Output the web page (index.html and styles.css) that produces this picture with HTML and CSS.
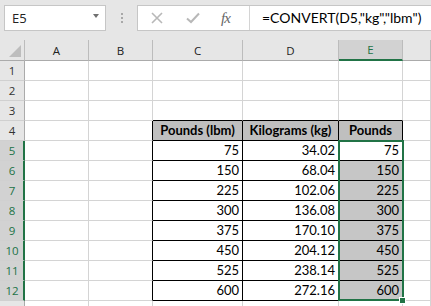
FILE: index.html
```html
<!DOCTYPE html>
<html>
<head>
<meta charset="utf-8">
<link rel="stylesheet" href="styles.css">
</head>
<body>
<div class="app">
  <div class="fbar">
    <div class="namebox"><span class="nb-text">E5</span><span class="nb-arrow"></span></div>
    <div class="grip"><i></i><i></i><i></i></div>
    <div class="fbox">
      <div class="fbtns">
        <svg class="ico" width="12" height="12" viewBox="0 0 12 12"><path d="M1 1 L11 11 M11 1 L1 11" stroke="#b8b8b8" stroke-width="1.6" fill="none"/></svg>
        <svg class="ico chk" width="14" height="12" viewBox="0 0 14 12"><path d="M1 6.5 L5 10 L13 1.5" stroke="#b8b8b8" stroke-width="2" fill="none"/></svg>
        <span class="fx">fx</span>
      </div>
      <div class="finput">=CONVERT(D5,"kg","lbm")</div>
    </div>
  </div>
  <div class="sheet">
    <div class="ch corner"><span class="tri"></span></div>
    <div class="ch">A</div><div class="ch">B</div><div class="ch">C</div><div class="ch">D</div><div class="ch on">E</div><div class="ch"></div>

    <div class="rh">1</div><div class="c"></div><div class="c"></div><div class="c"></div><div class="c"></div><div class="c"></div><div class="c"></div>
    <div class="rh">2</div><div class="c"></div><div class="c"></div><div class="c"></div><div class="c"></div><div class="c"></div><div class="c"></div>
    <div class="rh">3</div><div class="c"></div><div class="c"></div><div class="c tb"></div><div class="c tb"></div><div class="c tb"></div><div class="c"></div>
    <div class="rh">4</div><div class="c"></div><div class="c tl"></div><div class="c t th">Pounds (lbm)</div><div class="c t th">Kilograms (kg)</div><div class="c t th">Pounds</div><div class="c"></div>

    <div class="rh on">5</div><div class="c"></div><div class="c tl"></div><div class="c t num">75</div><div class="c t num">34.02</div><div class="c t num">75</div><div class="c"></div>
    <div class="rh on">6</div><div class="c"></div><div class="c tl"></div><div class="c t num">150</div><div class="c t num">68.04</div><div class="c t num sel">150</div><div class="c"></div>
    <div class="rh on">7</div><div class="c"></div><div class="c tl"></div><div class="c t num">225</div><div class="c t num">102.06</div><div class="c t num sel">225</div><div class="c"></div>
    <div class="rh on">8</div><div class="c"></div><div class="c tl"></div><div class="c t num">300</div><div class="c t num">136.08</div><div class="c t num sel">300</div><div class="c"></div>
    <div class="rh on">9</div><div class="c"></div><div class="c tl"></div><div class="c t num">375</div><div class="c t num">170.10</div><div class="c t num sel">375</div><div class="c"></div>
    <div class="rh on">10</div><div class="c"></div><div class="c tl"></div><div class="c t num">450</div><div class="c t num">204.12</div><div class="c t num sel">450</div><div class="c"></div>
    <div class="rh on">11</div><div class="c"></div><div class="c tl"></div><div class="c t num">525</div><div class="c t num">238.14</div><div class="c t num sel">525</div><div class="c"></div>
    <div class="rh on">12</div><div class="c"></div><div class="c tl"></div><div class="c t num">600</div><div class="c t num">272.16</div><div class="c t num sel">600</div><div class="c"></div>
    <div class="rh"></div><div class="c"></div><div class="c"></div><div class="c"></div><div class="c"></div><div class="c"></div><div class="c"></div>

    <div class="selbox"><span class="handle"></span></div>
  </div>
</div>
</body>
</html>
```
FILE: styles.css
```css
html, body {
  margin: 0;
  padding: 0;
  background: #e6e6e6;
}
.app {
  width: 431px;
  height: 306px;
  overflow: hidden;
  background: #e6e6e6;
}
.fbar {
  height: 40px;
  box-sizing: border-box;
  padding: 5px 0 0 4px;
  display: flex;
  align-items: flex-start;
}
.namebox {
  width: 102px;
  height: 26px;
  box-sizing: border-box;
  background: #fff;
  border: 1px solid #c6c6c6;
  display: flex;
  align-items: center;
  justify-content: space-between;
  padding: 0 6px 0 7px;
}
.nb-text {
  font: 13px "Open Sans", sans-serif;
  color: #222;
}
.nb-arrow {
  width: 0;
  height: 0;
  border-left: 3.5px solid transparent;
  border-right: 3.5px solid transparent;
  border-top: 4px solid #707070;
  margin-top: -4px;
}
.grip {
  width: 31px;
  height: 26px;
  display: flex;
  flex-direction: column;
  align-items: center;
  justify-content: center;
  gap: 2px;
}
.grip i {
  display: block;
  width: 2px;
  height: 2px;
  background: #a8a8a8;
}
.fbox {
  flex: 1;
  height: 26px;
  box-sizing: border-box;
  background: #fff;
  border: 1px solid #c6c6c6;
  border-right: none;
  display: flex;
  align-items: stretch;
}
.fbtns {
  width: 112px;
  border-right: 1px solid #d4d4d4;
  display: flex;
  align-items: center;
  padding-left: 13px;
  box-sizing: border-box;
}
.ico {
  display: block;
}
.chk {
  margin-left: 23px;
}
.fx {
  margin-left: 21px;
  font: italic 15px "Liberation Serif", serif;
  color: #666;
  letter-spacing: -1px;
}
.finput {
  padding-left: 12px;
  font: 14px Lato, sans-serif;
  color: #000;
  line-height: 24px;
  white-space: nowrap;
}
.sheet {
  position: relative;
  display: grid;
  grid-template-columns: 25px 64px 64px 90px 96px 64px 28px;
  grid-template-rows: 21px repeat(13, 20px);
  background: #fff;
}
.c {
  box-sizing: border-box;
  border-right: 1px solid #d4d4d4;
  border-bottom: 1px solid #d4d4d4;
  font: 13px Lato, sans-serif;
  color: #000;
  line-height: 19px;
  padding: 0 3px;
  white-space: nowrap;
  overflow: hidden;
}
.ch {
  box-sizing: border-box;
  background: #e6e6e6;
  border-right: 1px solid #bcbcbc;
  border-bottom: 1px solid #ababab;
  text-align: center;
  font: 11.5px "Open Sans", sans-serif;
  color: #222;
  line-height: 21px;
}
.ch.on {
  background: #d2d2d2;
  color: #217346;
  border-bottom: 2px solid #217346;
  line-height: 20px;
}
.corner {
  position: relative;
}
.tri {
  position: absolute;
  right: 3px;
  bottom: 3px;
  width: 0;
  height: 0;
  border-left: 12px solid transparent;
  border-bottom: 12px solid #bdbdbd;
}
.rh {
  box-sizing: border-box;
  background: #e6e6e6;
  border-right: 1px solid #ababab;
  border-bottom: 1px solid #d0d0d0;
  text-align: center;
  font: 11.5px "Open Sans", sans-serif;
  color: #333;
  line-height: 19px;
}
.rh.on {
  background: #d2d2d2;
  color: #217346;
  border-right: 2px solid #217346;
  padding-left: 1px;
}
.tb {
  border-bottom-color: #000;
}
.tl {
  border-right-color: #000;
}
.t {
  border-right-color: #000;
  border-bottom-color: #000;
}
.th {
  background: #bfbfbf;
  font-weight: bold;
  text-align: center;
  padding: 0;
}
.num {
  text-align: right;
}
.sel {
  background: #c6c6c6;
}
.selbox {
  position: absolute;
  grid-column: 6 / 7;
  grid-row: 6 / 14;
  top: -1px;
  left: -1px;
  right: -1px;
  bottom: 0;
  border: 2px solid #217346;
}
.handle {
  position: absolute;
  right: -4px;
  bottom: -5px;
  width: 5px;
  height: 5px;
  background: #217346;
  border: 1px solid #fff;
}
```
